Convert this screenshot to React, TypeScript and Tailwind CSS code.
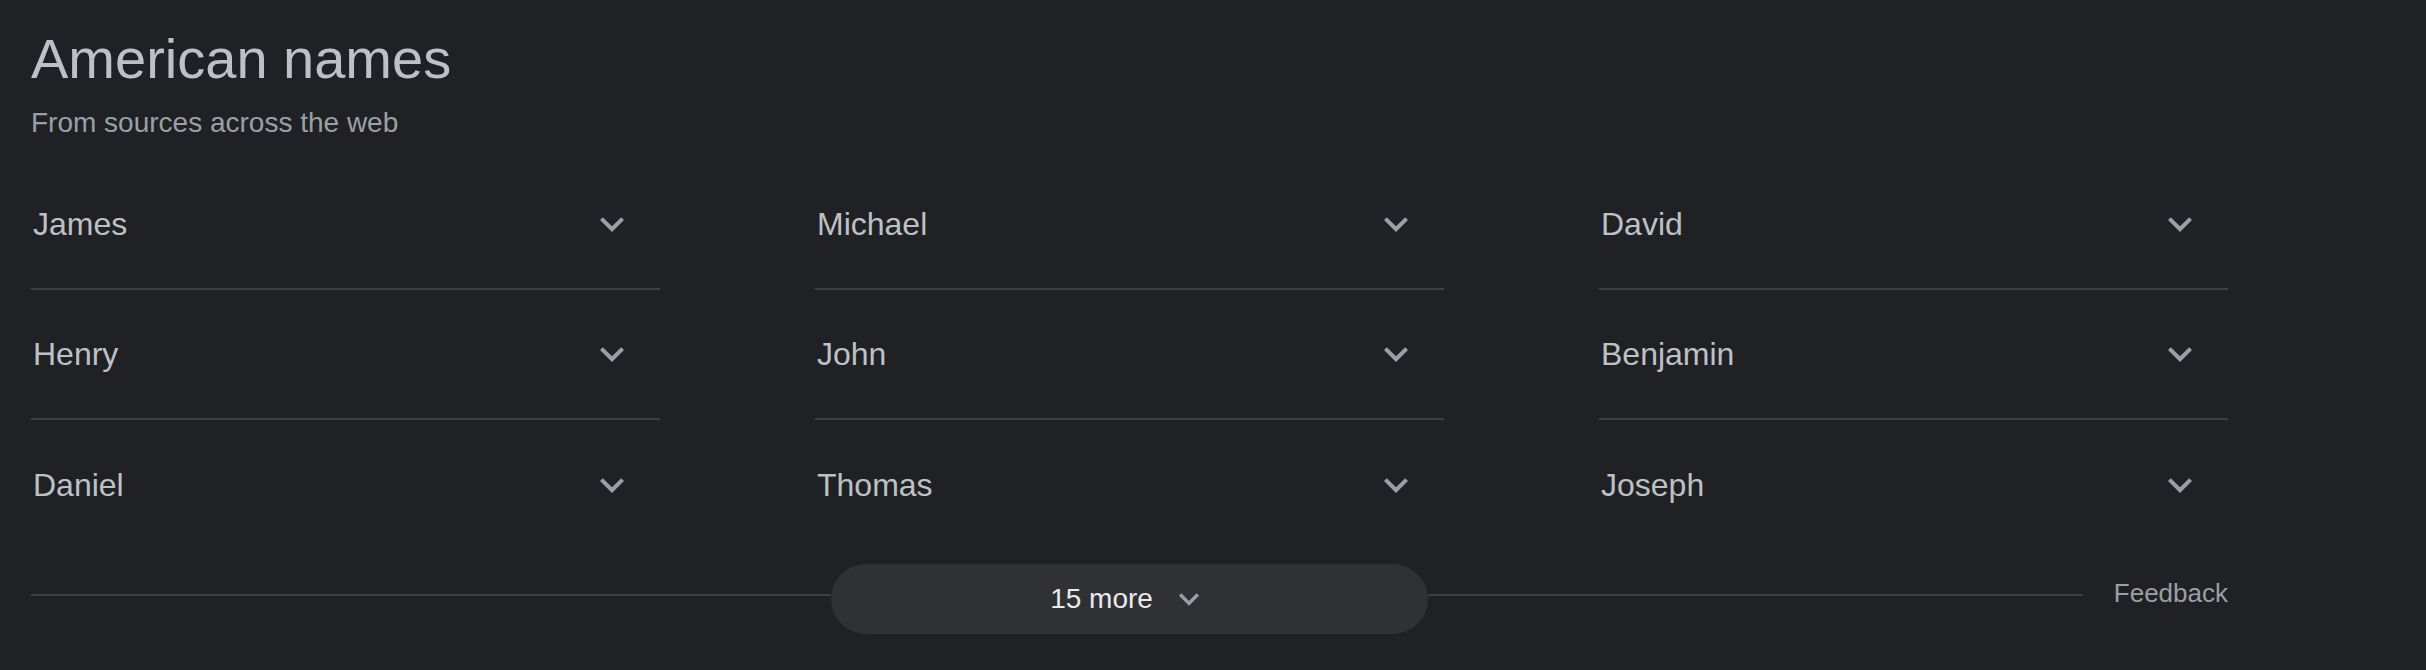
import React from 'react';

const NAMES = ['James', 'Michael', 'David', 'Henry', 'John', 'Benjamin', 'Daniel', 'Thomas', 'Joseph'];

const ExpandMore: React.FC<{ className?: string }> = ({ className }) => (
  <svg viewBox="0 0 24 24" className={className} fill="currentColor" aria-hidden="true">
    <path d="M16.59 8.59L12 13.17 7.41 8.59 6 10l6 6 6-6z" />
  </svg>
);

const NameRow: React.FC<{ name: string; last: boolean }> = ({ name, last }) => (
  <div
    className={
      'flex h-[130px] items-center justify-between pr-[24px] ' +
      (last ? '' : 'border-b-2 border-[#3c4043]')
    }
  >
    <span className="pl-[2px] text-[32px] leading-[40px] text-[#bdc1c6]">{name}</span>
    <ExpandMore className="h-[48px] w-[48px] text-[#9aa0a6]" />
  </div>
);

export default function App() {
  return (
    <div
      className="min-h-[670px] w-full bg-[#202124] pl-[31px] pt-[27px]"
      style={{ fontFamily: '"Liberation Sans", Arial, sans-serif' }}
    >
      <div className="w-[2197px]">
        <h2 className="text-[56px] leading-[64px] text-[#bdc1c6]">American names</h2>
        <p className="mt-[14px] text-[28px] leading-[36px] text-[#9aa0a6]">From sources across the web</p>

        {/* names grid */}
        <div className="mt-[19px] grid grid-cols-[629px_629px_629px] gap-x-[155px]">
          {NAMES.map((n, i) => (
            <NameRow key={n} name={n} last={i >= 6} />
          ))}
        </div>

        {/* footer */}
        <div className="mt-[14px] flex h-[70px] items-start">
          <div className="mt-[30px] h-[2px] w-[800px] bg-[#3c4043]" />
          <button className="flex h-[70px] w-[597px] items-center justify-center rounded-full bg-[#303134]">
            <span className="text-[28px] leading-[36px] text-[#e8eaed]">15 more</span>
            <ExpandMore className="ml-[16px] h-[40px] w-[40px] text-[#9aa0a6]" />
          </button>
          <div className="mt-[30px] h-[2px] flex-1 bg-[#3c4043]" />
          <span className="ml-[31px] mt-[13px] text-[26px] leading-[32px] text-[#9aa0a6]">Feedback</span>
        </div>
      </div>
    </div>
  );
}
